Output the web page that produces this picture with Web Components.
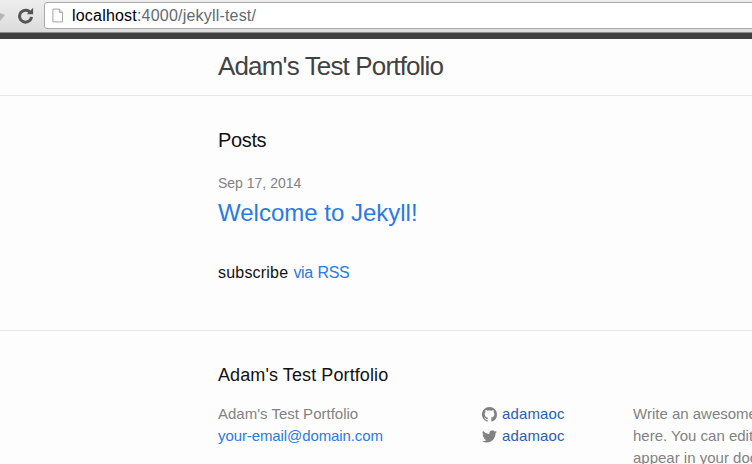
<!DOCTYPE html>
<html>
<head>
<meta charset="utf-8">
<title>Adam's Test Portfolio</title>
<style>
html, body { margin: 0; height: 464px; overflow: hidden; background: #fdfdfd; }
body { font-family: "Liberation Sans", Arial, sans-serif; color: #111; -webkit-font-smoothing: antialiased; }
</style>
</head>
<body>
<browser-bar url-host="localhost" url-rest=":4000/jekyll-test/"></browser-bar>
<site-header>Adam's Test Portfolio</site-header>
<post-list>
  <post-item date="Sep 17, 2014" title="Welcome to Jekyll!"></post-item>
</post-list>
<site-footer></site-footer>

<template id="browser-bar-tpl">
  <style>
    :host { display: block; height: 39px; box-sizing: border-box; overflow: hidden; }
    .bar {
      height: 33px; box-sizing: border-box; display: flex; align-items: flex-start;
      background: linear-gradient(#ededed, #dcdcdc);
      border-bottom: 1px solid #8c8c8c;
    }
    .back { width: 5px; height: 30px; flex: none; }
    .reload { width: 17px; height: 17px; margin: 7px 0 0 12px; flex: none; }
    .omni {
      flex: 1; height: 27px; margin: 2px -4px 0 10px; box-sizing: border-box;
      display: flex; align-items: center; gap: 9px; padding-left: 7px;
      background: #fff; border: 1px solid #a9a9a9; border-radius: 3px;
      font: 16px "Liberation Sans", Arial, sans-serif; letter-spacing: 0.2px;
    }
    .omni svg { width: 11px; height: 15px; flex: none; }
    .host { color: #000; }
    .rest { color: #5f6a70; }
    .dark { height: 6px; background: #3f3f3f; }
  </style>
  <div class="bar">
    <svg class="back" viewBox="0 0 5 30"><path d="M-6 15 L0 9 V13 H0 L5 15 L0 21 Z" fill="#b4b4b4"/></svg>
    <svg class="reload" viewBox="0 0 20 20"><path d="M16 7.2A7 7 0 1 0 17 11.5" fill="none" stroke="#555" stroke-width="3.500"/><path d="M11.500 8.500H19V1Z" fill="#555"/></svg>
    <div class="omni">
      <svg viewBox="0 0 12 16"><path d="M1 1H8L11.500 4.500V15H1Z" fill="#fff" stroke="#9a9a9a"/><path d="M8 1V4.500H11.500" fill="#e4e4e4" stroke="#9a9a9a"/></svg>
      <span><span class="host"></span><span class="rest"></span></span>
    </div>
  </div>
  <div class="dark"></div>
</template>

<template id="site-header-tpl">
  <style>
    :host { display: block; height: 57px; box-sizing: border-box; border-bottom: 1px solid #e8e8e8; padding: 11px 0 0 218px; }
    div { font-size: 26px; line-height: 32px; color: #424242; letter-spacing: -0.85px; white-space: nowrap; }
  </style>
  <div><slot></slot></div>
</template>

<template id="post-list-tpl">
  <style>
    :host { display: block; height: 235px; box-sizing: border-box; border-bottom: 1px solid #e8e8e8; padding: 31px 0 0 218px; }
    h1 { margin: 0 0 20px; font-size: 20px; line-height: 26px; font-weight: 400; color: #111; letter-spacing: -0.35px; }
    p { margin: 33px 0 0; font-size: 16px; line-height: 24px; color: #111; letter-spacing: 0.2px; word-spacing: 0.5px; }
    a { color: #2a7ae2; text-decoration: none; letter-spacing: -0.35px; }
  </style>
  <h1>Posts</h1>
  <slot></slot>
  <p>subscribe <a href="#">via RSS</a></p>
</template>

<template id="post-item-tpl">
  <style>
    :host { display: block; }
    .date { font-size: 14px; line-height: 20px; color: #828282; }
    a { display: block; margin-top: 5px; font-size: 24px; line-height: 30px; color: #2a7ae2; text-decoration: none; }
  </style>
  <div class="date"></div>
  <a href="#"></a>
</template>

<template id="site-footer-tpl">
  <style>
    :host { display: block; padding: 32px 0 0 218px; font-size: 15px; line-height: 22px; color: #828282; white-space: nowrap; overflow: hidden; }
    h2 { margin: 0 0 16px; font-size: 18px; line-height: 24px; font-weight: 400; color: #111; letter-spacing: 0.1px; }
    .cols { display: flex; }
    .one { width: 264px; flex: none; }
    .two { width: 151px; flex: none; }
    a { color: #2a7ae2; text-decoration: none; }
    .one a { letter-spacing: -0.1px; }
    .two a { color: #2a5db0; letter-spacing: 0.15px; }
    .row { display: flex; align-items: center; gap: 5px; }
    svg { width: 15px; height: 15px; fill: #828282; flex: none; }
  </style>
  <h2>Adam's Test Portfolio</h2>
  <div class="cols">
    <div class="one">
      <div>Adam's Test Portfolio</div>
      <a href="#">your-email@domain.com</a>
    </div>
    <div class="two">
      <div class="row">
        <svg viewBox="0 0 16 16"><path d="M8 0C3.580 0 0 3.580 0 8c0 3.540 2.290 6.530 5.470 7.590.4.070.55-.170.55-.380 0-.190-.010-.820-.010-1.490-2.010.370-2.530-.490-2.690-.940-.090-.230-.480-.940-.820-1.130-.280-.150-.680-.520-.010-.530.630-.010 1.080.580 1.230.820.720 1.210 1.870.870 2.330.660.070-.520.280-.870.510-1.070-1.780-.200-3.640-.890-3.640-3.950 0-.870.310-1.590.820-2.150-.080-.200-.360-1.020.080-2.120 0 0 .670-.210 2.200.820.640-.180 1.320-.270 2-.270s1.360.090 2 .270c1.530-1.040 2.200-.820 2.200-.820.440 1.100.160 1.920.080 2.120.510.560.820 1.270.820 2.150 0 3.070-1.870 3.750-3.650 3.950.290.250.540.730.540 1.480 0 1.070-.010 1.930-.010 2.200 0 .210.150.460.550.380A8.010 8.010 0 0 0 16 8c0-4.420-3.580-8-8-8z"/></svg>
        <a href="#">adamaoc</a>
      </div>
      <div class="row">
        <svg viewBox="0 0 16 16"><path d="M15.970 3.040c-.590.260-1.220.440-1.880.520.680-.410 1.200-1.050 1.440-1.810-.630.370-1.330.640-2.080.790A3.280 3.280 0 0 0 7.860 5.530 9.300 9.300 0 0 1 1.110 2.110a3.280 3.280 0 0 0 1.010 4.370c-.540-.020-1.040-.160-1.480-.410v.040c0 1.590 1.130 2.910 2.630 3.210-.480.130-.990.150-1.480.060.420 1.300 1.630 2.250 3.060 2.270A6.580 6.580 0 0 1 0 13.010 9.280 9.280 0 0 0 5.030 14.480c6.040 0 9.340-5 9.340-9.340l-.010-.420c.640-.460 1.200-1.040 1.610-1.680z"/></svg>
        <a href="#">adamaoc</a>
      </div>
    </div>
    <div>Write an awesome description for your new site<br>here. You can edit this line in _config.yml. It will<br>appear in your document head meta</div>
  </div>
</template>

<script>
// copies a template into an open shadow root
function mount (el, id) {
  el.attachShadow({ mode: 'open' })
    .appendChild(document.getElementById(id).content.cloneNode(true))
  return el.shadowRoot
}

customElements.define('browser-bar', class extends HTMLElement {
  constructor () {
    super()
    const root = mount(this, 'browser-bar-tpl')
    root.querySelector('.host').textContent = this.getAttribute('url-host')
    root.querySelector('.rest').textContent = this.getAttribute('url-rest')
  }
})

customElements.define('site-header', class extends HTMLElement {
  constructor () {
    super()
    mount(this, 'site-header-tpl')
  }
})

customElements.define('post-list', class extends HTMLElement {
  constructor () {
    super()
    mount(this, 'post-list-tpl')
  }
})

customElements.define('post-item', class extends HTMLElement {
  constructor () {
    super()
    const root = mount(this, 'post-item-tpl')
    root.querySelector('.date').textContent = this.getAttribute('date')
    root.querySelector('a').textContent = this.getAttribute('title')
  }
})

customElements.define('site-footer', class extends HTMLElement {
  constructor () {
    super()
    mount(this, 'site-footer-tpl')
  }
})
</script>
</body>
</html>
